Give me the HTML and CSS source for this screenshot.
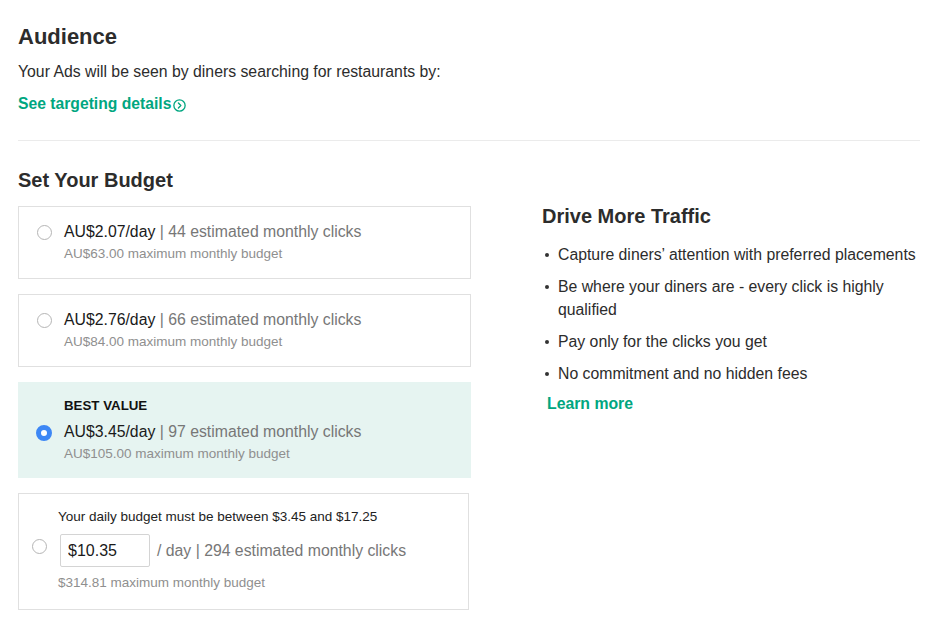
FILE: index.html
```html
<!DOCTYPE html>
<html>
<head>
    <meta charset="UTF-8">
    <meta name="viewport" content="width=device-width, initial-scale=1.0">
    <title>Set Your Budget</title>
    <link rel="stylesheet" href="styles.css">
</head>
<body>
    <div class="page">
        <section class="audience">
            <h2 class="title">Audience</h2>
            <p class="lead">Your Ads will be seen by diners searching for restaurants by:</p>
            <a href="#" class="details-link">See targeting details<svg class="chev" viewBox="0 0 12 12" width="13" height="13"><circle cx="6" cy="6" r="5.2" fill="none" stroke="currentColor" stroke-width="1.2"/><path d="M5 3.8 7.2 6 5 8.2" fill="none" stroke="currentColor" stroke-width="1.3" stroke-linecap="round" stroke-linejoin="round"/></svg></a>
        </section>

        <hr class="divider">

        <h2>Set Your Budget</h2>
        <div class="budget">
            <form class="options">
                <label class="option">
                    <input type="radio" name="budget">
                    <div class="option-body">
                        <div class="main"><span class="price">AU$2.07/day</span> | 44 estimated monthly clicks</div>
                        <div class="sub">AU$63.00 maximum monthly budget</div>
                    </div>
                </label>
                <label class="option">
                    <input type="radio" name="budget">
                    <div class="option-body">
                        <div class="main"><span class="price">AU$2.76/day</span> | 66 estimated monthly clicks</div>
                        <div class="sub">AU$84.00 maximum monthly budget</div>
                    </div>
                </label>
                <label class="option best">
                    <input type="radio" name="budget" checked>
                    <div class="option-body">
                        <div class="tag">BEST VALUE</div>
                        <div class="main"><span class="price">AU$3.45/day</span> | 97 estimated monthly clicks</div>
                        <div class="sub">AU$105.00 maximum monthly budget</div>
                    </div>
                </label>
                <label class="option custom">
                    <input type="radio" name="budget">
                    <div class="option-body">
                        <div class="hint">Your daily budget must be between $3.45 and $17.25</div>
                        <div class="custom-row">
                            <input type="text" class="amount" value="$10.35">
                            <span class="main">/ day | 294 estimated monthly clicks</span>
                        </div>
                        <div class="sub">$314.81 maximum monthly budget</div>
                    </div>
                </label>
            </form>

            <aside class="traffic">
                <h3>Drive More Traffic</h3>
                <ul>
                    <li>Capture diners’ attention with preferred placements</li>
                    <li>Be where your diners are - every click is highly qualified</li>
                    <li>Pay only for the clicks you get</li>
                    <li>No commitment and no hidden fees</li>
                </ul>
                <a href="#" class="learn">Learn more</a>
            </aside>
        </div>
    </div>
</body>
</html>
```

FILE: styles.css
```css
body { margin: 0; font-family: "Liberation Sans", Arial, sans-serif; color: #2c2c2c; background: #fff; }
.page { padding: 0 19px 0 18px; }
h2 { font-size: 20px; line-height: 24px; margin: 0; font-weight: bold; }
h2.title { font-size: 22px; line-height: 26px; }
.audience { padding-top: 24px; }
.lead { font-size: 15.8px; line-height: 20px; margin: 12px 0 0; }
.details-link { display: inline-flex; align-items: center; margin-top: 12px; color: #00a680; font-weight: bold; font-size: 15.7px; line-height: 20px; text-decoration: none; }
.chev { margin-left: 2px; margin-top: 2px; }
.divider { border: none; border-top: 1px solid #ebebeb; margin: 26px 0 27px; }

.budget { display: flex; margin-top: 14px; }
.options { width: 453px; flex: none; display: flex; flex-direction: column; gap: 15px; }
.option { display: flex; align-items: flex-start; border: 1px solid #e0e0e0; padding: 15px 16px 16px 18px; cursor: pointer; }
.option input[type=radio] { appearance: none; -webkit-appearance: none; width: 15px; height: 15px; margin: 3px 12px 0 0; border: 1px solid #b5b5b5; border-radius: 50%; background: #fff; flex: none; box-sizing: border-box; }
.option input[type=radio]:checked { border: 5px solid #3d87f5; background: #fff; width: 16px; height: 16px; margin-left: -1px; }
.main { font-size: 15.8px; line-height: 20px; color: #777; }
.price { color: #1a1a1a; }
.sub { font-size: 13.5px; line-height: 16px; color: #8f8f8f; margin-top: 4px; }
.best { background: #e6f4f1; border-color: #e6f4f1; padding-bottom: 15px; }
.best input[type=radio] { margin-top: 27px; }
.tag { font-size: 13.3px; line-height: 16px; font-weight: bold; color: #111; margin-bottom: 8px; }

.custom { width: 451px; box-sizing: border-box; padding: 15px 16px 18px 13px; }
.custom input[type=radio] { margin-top: 30px; margin-right: 11px; }
.hint { font-size: 13.5px; line-height: 16px; color: #222; }
.custom-row { display: flex; align-items: center; gap: 7px; margin-top: 9px; }
.amount { width: 90px; height: 33px; box-sizing: border-box; border: 1px solid #d4d4d4; border-radius: 2px; padding: 0 7px; font-family: inherit; font-size: 16px; color: #1a1a1a; margin-left: 2px; }
.custom .sub { margin-top: 8px; }

.traffic { margin-left: 71px; }
h3 { font-size: 20px; line-height: 24px; margin: -2px 0 0; }
.traffic ul { margin: 15px 0 0; padding: 0 0 0 16px; list-style: none; }
.traffic li { font-size: 15.8px; line-height: 23px; margin-bottom: 9px; position: relative; }
.traffic li::before { content: ""; position: absolute; left: -13px; top: 10px; width: 4px; height: 4px; border-radius: 50%; background: #333; }
.learn { display: block; margin-left: 5px; margin-top: 1px; color: #00a680; font-weight: bold; font-size: 15.8px; line-height: 20px; text-decoration: none; }
```
